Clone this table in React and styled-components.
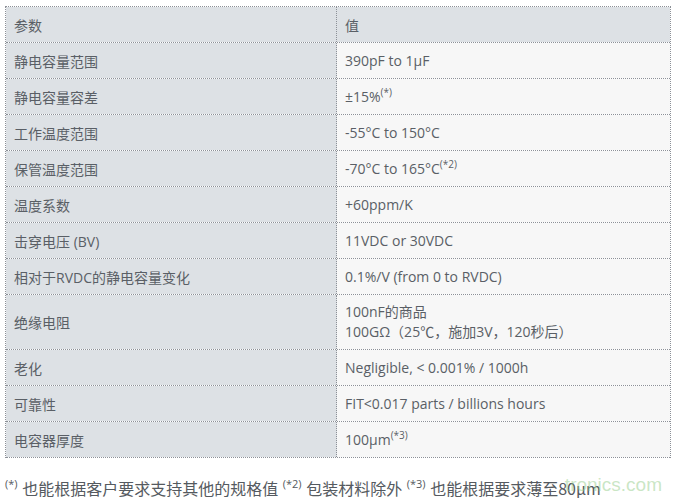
import React from 'react';
import styled, { createGlobalStyle } from 'styled-components';

const GlobalStyle = createGlobalStyle`
  html, body {
    margin: 0;
    padding: 0;
    background: #ffffff;
  }
  body {
    font-family: "Open Sans", "Noto Sans CJK SC", sans-serif;
    color: #555a60;
  }
`;

const rows = [
  { name: '静电容量范围', value: '390pF to 1μF' },
  { name: '静电容量容差', value: '±15%', note: '(*)' },
  { name: '工作温度范围', value: '-55°C to 150°C' },
  { name: '保管温度范围', value: '-70°C to 165°C', note: '(*2)' },
  { name: '温度系数', value: '+60ppm/K' },
  { name: '击穿电压 (BV)', value: '11VDC or 30VDC' },
  { name: '相对于RVDC的静电容量变化', value: '0.1%/V (from 0 to RVDC)' },
  {
    name: '绝缘电阻',
    lines: ['100nF的商品', '100GΩ（25℃，施加3V，120秒后）'],
    tall: true,
  },
  { name: '老化', value: 'Negligible, < 0.001% / 1000h' },
  { name: '可靠性', value: 'FIT<0.017 parts / billions hours' },
  { name: '电容器厚度', value: '100μm', note: '(*3)' },
];

const App = () => (
  <Page>
    <GlobalStyle />
    <Table>
      <Row>
        <NameCell>参数</NameCell>
        <ValueCell header>值</ValueCell>
      </Row>
      {rows.map((r) => (
        <Row key={r.name} tall={r.tall}>
          <NameCell>{r.name}</NameCell>
          <ValueCell>
            {r.lines ? (
              <Lines>
                {r.lines.map((l) => (
                  <span key={l}>{l}</span>
                ))}
              </Lines>
            ) : (
              <span>
                {r.value}
                {r.note && <Sup>{r.note}</Sup>}
              </span>
            )}
          </ValueCell>
        </Row>
      ))}
    </Table>
    <Footnote>
      <FootSup>(*)</FootSup> 也能根据客户要求支持其他的规格值 <FootSup>(*2)</FootSup>{' '}
      包装材料除外 <FootSup>(*3)</FootSup> 也能根据要求薄至80μm
      <Watermark>tronics.com</Watermark>
    </Footnote>
  </Page>
);

const Page = styled.div`
  width: 680px;
  height: 502px;
  padding: 6px 0 0 5px;
  box-sizing: border-box;
  overflow: hidden;
`;

const Table = styled.div`
  width: 666px;
  display: flex;
  flex-direction: column;
  border-top: 1px dotted #8c9097;
  border-left: 1px dotted #8c9097;
  border-right: 1px dotted #8c9097;
  box-sizing: border-box;
`;

const Row = styled.div`
  display: grid;
  grid-template-columns: 331px 1fr;
  height: ${(p) => (p.tall ? 55 : 36)}px;
  border-bottom: 1px dotted #8c9097;
  box-sizing: border-box;
  font-size: 14px;
`;

const NameCell = styled.div`
  display: flex;
  align-items: center;
  padding-left: 8px;
  background: #dde1e5;
  border-right: 1px dotted #8c9097;
  color: #5a5f66;
`;

const ValueCell = styled.div`
  display: flex;
  align-items: center;
  padding-left: 8px;
  background: ${(p) => (p.header ? '#dde1e5' : '#f7f7f7')};
  color: #5a5f66;
`;

const Lines = styled.div`
  display: flex;
  flex-direction: column;
  line-height: 20px;
`;

const Sup = styled.sup`
  font-size: 10px;
  vertical-align: 6px;
  line-height: 0;
`;

const Footnote = styled.div`
  position: relative;
  margin-top: 18px;
  margin-left: -1px;
  font-family: "Noto Sans CJK SC", "Open Sans", sans-serif;
  font-size: 16px;
  color: #555a60;
  white-space: nowrap;
`;

const FootSup = styled.sup`
  font-family: "Open Sans", sans-serif;
  font-size: 11px;
  vertical-align: 7px;
  line-height: 0;
  margin: 0 1px;
`;

const Watermark = styled.span`
  position: absolute;
  right: 18px;
  top: -2px;
  font-family: "Liberation Sans", sans-serif;
  font-size: 19px;
  color: rgba(150, 205, 140, 0.5);
`;

export default App;
